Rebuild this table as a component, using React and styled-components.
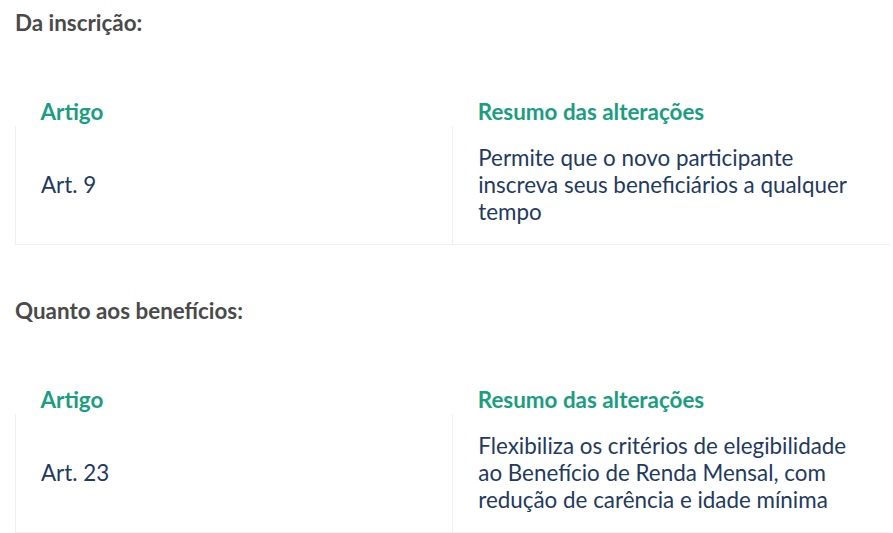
import React from 'react';
import styled, {createGlobalStyle} from "styled-components";

const GlobalStyle = createGlobalStyle`
  body {
    margin: 0;
    background: #fff;
    font-family: Lato, "Open Sans", sans-serif;
  }
`

const Page = styled.div`
  width: 875px;
  padding: 9px 0 0 15px;
`

const SectionTitle = styled.h3`
  margin: 0;
  font-size: 22.4px;
  line-height: 27px;
  font-weight: 700;
  color: #4a4a4a;
`

const Table = styled.table`
  width: 100%;
  border-collapse: collapse;
  table-layout: fixed;
  margin: 62px 0 ${p => p.$last ? 0 : 52}px;
`

const HeadCell = styled.th`
  text-align: left;
  padding: 0 25px 1px;
  font-size: 22.4px;
  line-height: 27px;
  font-weight: 700;
  color: #1b9d80;
`

const Row = styled.tr`
  border-bottom: 1px solid #efefef;
`

const Cell = styled.td`
  padding: 18px 25px 19px;
  font-size: 22.4px;
  line-height: 27px;
  color: #233a5e;
  vertical-align: middle;
  border-left: 1px solid #efefef;
`

const sections = [
    {
        title: "Da inscrição:",
        art: "Art. 9",
        resumo: "Permite que o novo participante inscreva seus beneficiários a qualquer tempo"
    },
    {
        title: "Quanto aos benefícios:",
        art: "Art. 23",
        resumo: "Flexibiliza os critérios de elegibilidade ao Benefício de Renda Mensal, com redução de carência e idade mínima"
    }
]

const App = () => {
    return (
        <Page>
            <GlobalStyle/>
            {sections.map((s, i) => (
                <section key={s.title}>
                    <SectionTitle>{s.title}</SectionTitle>
                    <Table $last={i === sections.length - 1}>
                        <thead>
                        <tr>
                            <HeadCell>Artigo</HeadCell>
                            <HeadCell>Resumo das alterações</HeadCell>
                        </tr>
                        </thead>
                        <tbody>
                        <Row>
                            <Cell>{s.art}</Cell>
                            <Cell>{s.resumo}</Cell>
                        </Row>
                        </tbody>
                    </Table>
                </section>
            ))}
        </Page>
    );
};

export default App;
